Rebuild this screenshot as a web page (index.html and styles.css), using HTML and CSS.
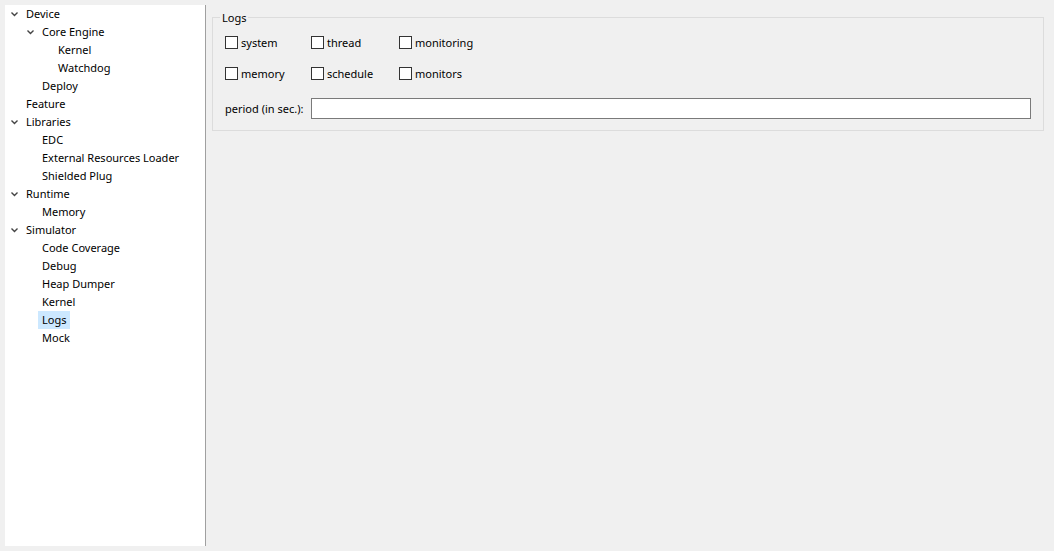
FILE: index.html
```html
<!DOCTYPE html>
<html>
<head>
<meta charset="utf-8">
<link rel="stylesheet" href="styles.css">
</head>
<body>
<div class="tree">
  <div class="row l0"><span class="tw"><svg width="16" height="18"><path d="M1.5 7.5 L4.5 10.5 L7.5 7.5" fill="none" stroke="#444" stroke-width="1.4"/></svg></span><span class="lbl">Device</span></div>
  <div class="row l1"><span class="tw"><svg width="16" height="18"><path d="M1.5 7.5 L4.5 10.5 L7.5 7.5" fill="none" stroke="#444" stroke-width="1.4"/></svg></span><span class="lbl">Core Engine</span></div>
  <div class="row l2"><span class="tw"></span><span class="lbl">Kernel</span></div>
  <div class="row l2"><span class="tw"></span><span class="lbl">Watchdog</span></div>
  <div class="row l1"><span class="tw"></span><span class="lbl">Deploy</span></div>
  <div class="row l0"><span class="tw"></span><span class="lbl">Feature</span></div>
  <div class="row l0"><span class="tw"><svg width="16" height="18"><path d="M1.5 7.5 L4.5 10.5 L7.5 7.5" fill="none" stroke="#444" stroke-width="1.4"/></svg></span><span class="lbl">Libraries</span></div>
  <div class="row l1"><span class="tw"></span><span class="lbl">EDC</span></div>
  <div class="row l1"><span class="tw"></span><span class="lbl">External Resources Loader</span></div>
  <div class="row l1"><span class="tw"></span><span class="lbl">Shielded Plug</span></div>
  <div class="row l0"><span class="tw"><svg width="16" height="18"><path d="M1.5 7.5 L4.5 10.5 L7.5 7.5" fill="none" stroke="#444" stroke-width="1.4"/></svg></span><span class="lbl">Runtime</span></div>
  <div class="row l1"><span class="tw"></span><span class="lbl">Memory</span></div>
  <div class="row l0"><span class="tw"><svg width="16" height="18"><path d="M1.5 7.5 L4.5 10.5 L7.5 7.5" fill="none" stroke="#444" stroke-width="1.4"/></svg></span><span class="lbl">Simulator</span></div>
  <div class="row l1"><span class="tw"></span><span class="lbl">Code Coverage</span></div>
  <div class="row l1"><span class="tw"></span><span class="lbl">Debug</span></div>
  <div class="row l1"><span class="tw"></span><span class="lbl">Heap Dumper</span></div>
  <div class="row l1"><span class="tw"></span><span class="lbl">Kernel</span></div>
  <div class="row l1"><span class="tw"></span><span class="lbl sel">Logs</span></div>
  <div class="row l1"><span class="tw"></span><span class="lbl">Mock</span></div>
</div>
<div class="content">
  <div class="group">
    <span class="legend">Logs</span>
    <div class="grid">
      <label class="cb"><span class="box"></span>system</label>
      <label class="cb"><span class="box"></span>thread</label>
      <label class="cb"><span class="box"></span>monitoring</label>
      <label class="cb"><span class="box"></span>memory</label>
      <label class="cb"><span class="box"></span>schedule</label>
      <label class="cb"><span class="box"></span>monitors</label>
      <span class="plabel">period (in sec.):</span>
      <span class="input"></span>
    </div>
  </div>
</div>
</body>
</html>
```
FILE: styles.css
```css
html, body {
  margin: 0;
  padding: 0;
}
body {
  background: #f0f0f0;
  font-family: "Noto Sans", "Open Sans", sans-serif;
  font-size: 11px;
  color: #000;
  display: flex;
  align-items: flex-start;
  padding: 5px 10px 5px 5px;
  width: 1054px;
  height: 551px;
  box-sizing: border-box;
}
.tree {
  width: 200px;
  height: 541px;
  background: #fff;
  border-right: 1px solid #a0a0a0;
  flex: none;
}
.row {
  height: 18px;
  display: flex;
  align-items: center;
  white-space: nowrap;
}
.l0 { padding-left: 5px; }
.l1 { padding-left: 21px; }
.l2 { padding-left: 37px; }
.tw {
  width: 16px;
  height: 18px;
  flex: none;
}
.tw svg { display: block; }
.lbl {
  line-height: 18px;
  padding: 0 4px;
  margin-left: -4px;
}
.lbl.sel { background: #cce8ff; }
.content {
  flex: 1;
  padding-left: 6px;
  padding-top: 12px;
}
.group {
  position: relative;
  border: 1px solid #dcdcdc;
  padding: 18px 12px 11px 12px;
}
.legend {
  position: absolute;
  top: -8px;
  left: 7px;
  padding: 0 2px;
  background: #f0f0f0;
  line-height: 16px;
}
.grid {
  display: grid;
  grid-template-columns: 86px 88px 1fr;
  grid-template-rows: 13px 13px 21px;
  row-gap: 18px;
}
.cb {
  display: flex;
  align-items: center;
  gap: 3px;
  height: 13px;
  line-height: 13px;
  white-space: nowrap;
}
.box {
  width: 11px;
  height: 11px;
  border: 1px solid #333;
  background: #fff;
  flex: none;
}
.plabel {
  display: flex;
  align-items: center;
  white-space: nowrap;
}
.input {
  grid-column: 2 / 4;
  height: 19px;
  border: 1px solid #7a7a7a;
  background: #fff;
}
```
